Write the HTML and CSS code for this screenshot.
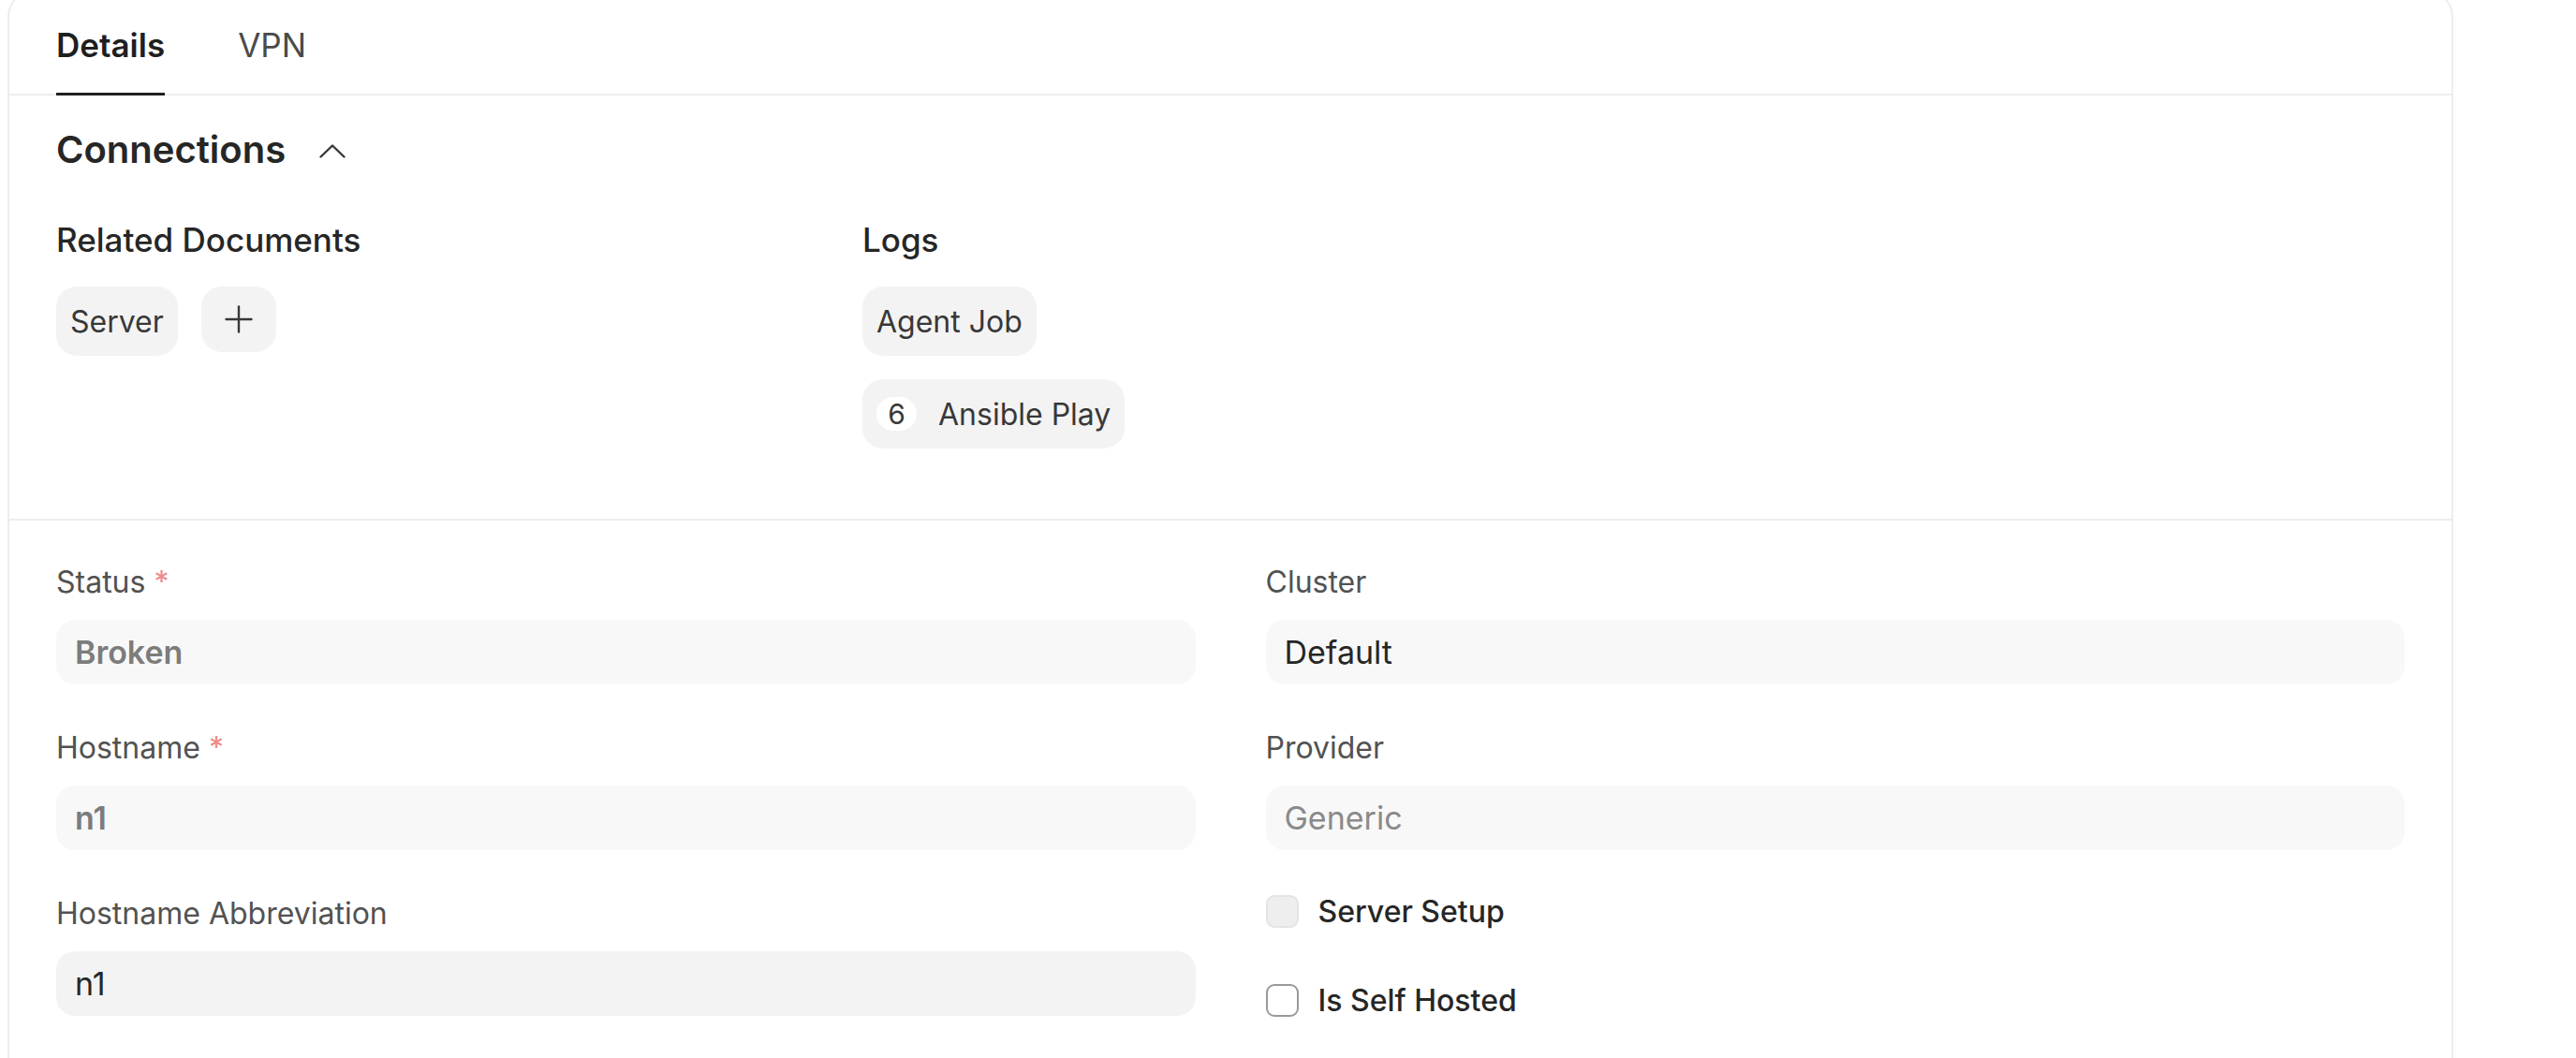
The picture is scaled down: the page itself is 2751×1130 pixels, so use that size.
FILE: index.html
```html
<!DOCTYPE html>
<html lang="en">
<head>
<meta charset="utf-8">
<title>Server Details</title>
<link rel="stylesheet" href="styles.css">
</head>
<body>
<div class="page">
  <div class="card">
    <nav class="tabs">
      <a class="tab active">Details</a>
      <a class="tab">VPN</a>
    </nav>

    <section class="connections">
      <div class="sec-head">
        <h3 class="sec-title">Connections</h3>
        <svg class="chevron" width="28" height="15" viewBox="0 0 28 15" fill="none" stroke="#383838" stroke-width="2.4" stroke-linecap="round" stroke-linejoin="round"><polyline points="1.5,13.5 14,1.5 26.5,13.5"/></svg>
      </div>
      <div class="conn-grid">
        <div class="conn-col">
          <div class="conn-title">Related Documents</div>
          <div class="pill-row">
            <span class="pill">Server</span>
            <span class="pill pill-add"><svg width="30" height="30" viewBox="0 0 30 30" fill="none" stroke="#383838" stroke-width="2.4" stroke-linecap="round"><line x1="15" y1="1.5" x2="15" y2="28.5"/><line x1="1.5" y1="15" x2="28.5" y2="15"/></svg></span>
          </div>
        </div>
        <div class="conn-col">
          <div class="conn-title">Logs</div>
          <div class="pill-stack">
            <span class="pill">Agent Job</span>
            <span class="pill"><span class="count">6</span>Ansible Play</span>
          </div>
        </div>
        <div class="conn-col"></div>
      </div>
    </section>

    <section class="fields">
      <div class="col">
        <div class="field">
          <label class="label">Status <span class="reqd">*</span></label>
          <div class="input readonly strong">Broken</div>
        </div>
        <div class="field">
          <label class="label">Hostname <span class="reqd">*</span></label>
          <div class="input readonly strong">n1</div>
        </div>
        <div class="field">
          <label class="label">Hostname Abbreviation</label>
          <div class="input editable">n1</div>
        </div>
      </div>
      <div class="col">
        <div class="field">
          <label class="label">Cluster</label>
          <div class="input readonly dark">Default</div>
        </div>
        <div class="field">
          <label class="label">Provider</label>
          <div class="input readonly muted">Generic</div>
        </div>
        <div class="check-row">
          <span class="checkbox disabled"></span>
          <span class="check-label">Server Setup</span>
        </div>
        <div class="check-row second">
          <span class="checkbox"></span>
          <span class="check-label">Is Self Hosted</span>
        </div>
      </div>
    </section>
  </div>
</div>
</body>
</html>
```

FILE: styles.css
```css
html, body {
  margin: 0;
  padding: 0;
  background: #ffffff;
  overflow: hidden;
}

body {
  font-family: Inter, "Noto Sans", "Liberation Sans", sans-serif;
  color: #383838;
  -webkit-font-smoothing: antialiased;
}

.page {
  padding-left: 8px;
}

.card {
  box-sizing: border-box;
  width: 2612px;
  min-height: 1300px;
  margin-top: -11px;
  border: 2px solid #ededed;
  border-radius: 29px;
  background: #ffffff;
}

/* Tabs */
.tabs {
  display: flex;
  gap: 78px;
  padding: 0 50px;
  border-bottom: 2px solid #ededed;
}

.tab {
  display: block;
  padding: 37px 0 31px;
  line-height: 40px;
  font-size: 35px;
  color: #4a4a4a;
  border-bottom: 3px solid transparent;
  margin-bottom: -2px;
  cursor: pointer;
}

.tab.active {
  color: #1f1f1f;
  font-weight: 600;
  border-bottom-color: #1f1f1f;
}

/* Connections */
.connections {
  padding: 33px 50px 75px;
  border-bottom: 2px solid #ededed;
}

.sec-head {
  display: flex;
  align-items: center;
  gap: 36px;
  height: 50px;
}

.sec-title {
  margin: 0;
  font-size: 40px;
  font-weight: 600;
  color: #262626;
  line-height: 50px;
}

.chevron {
  display: block;
  margin-top: 2px;
}

.conn-grid {
  display: grid;
  grid-template-columns: repeat(3, 1fr);
  column-gap: 75px;
  margin-top: 51px;
}

.conn-title {
  font-size: 35px;
  font-weight: 500;
  line-height: 40px;
  color: #262626;
  margin-bottom: 30px;
}

.pill-row {
  display: flex;
  align-items: flex-start;
  gap: 25px;
}

.pill-stack {
  display: flex;
  flex-direction: column;
  align-items: flex-start;
  gap: 25px;
}

.pill {
  display: inline-flex;
  align-items: center;
  box-sizing: border-box;
  height: 74px;
  padding: 0 15px;
  border-radius: 22px;
  background: #f3f3f3;
  font-size: 32px;
  color: #383838;
  white-space: nowrap;
}

.pill-add {
  width: 80px;
  height: 70px;
  justify-content: center;
  padding: 0;
}

.pill-add svg {
  display: block;
}

.count {
  display: inline-flex;
  align-items: center;
  justify-content: center;
  width: 43px;
  height: 36px;
  border-radius: 18px;
  background: #ffffff;
  margin-right: 23px;
  font-size: 30px;
}

/* Fields */
.fields {
  display: grid;
  grid-template-columns: 1fr 1fr;
  column-gap: 75px;
  padding: 46px 50px 40px;
}

.field {
  margin-bottom: 48px;
}

.label {
  display: block;
  font-size: 32px;
  line-height: 40px;
  color: #525252;
  margin-bottom: 20px;
}

.reqd {
  color: #ef8a8a;
}

.input {
  box-sizing: border-box;
  height: 69px;
  line-height: 69px;
  padding: 0 20px;
  border-radius: 20px;
  font-size: 34px;
}

.input.readonly {
  background: #f8f8f8;
}

.input.editable {
  background: #f3f3f3;
  color: #262626;
}

.input.strong {
  color: #7c7c7c;
  font-weight: 600;
}

.input.dark {
  color: #262626;
}

.input.muted {
  color: #8a8a8a;
}

.check-row {
  display: flex;
  align-items: center;
  gap: 21px;
  height: 35px;
}

.check-row.second {
  margin-top: 60px;
}

.checkbox {
  box-sizing: border-box;
  width: 35px;
  height: 35px;
  border-radius: 9px;
  border: 2px solid #999999;
  background: #ffffff;
}

.checkbox.disabled {
  border-color: #e4e4e4;
  background: #eeeeee;
}

.check-label {
  font-size: 32px;
  font-weight: 500;
  color: #262626;
}
```
